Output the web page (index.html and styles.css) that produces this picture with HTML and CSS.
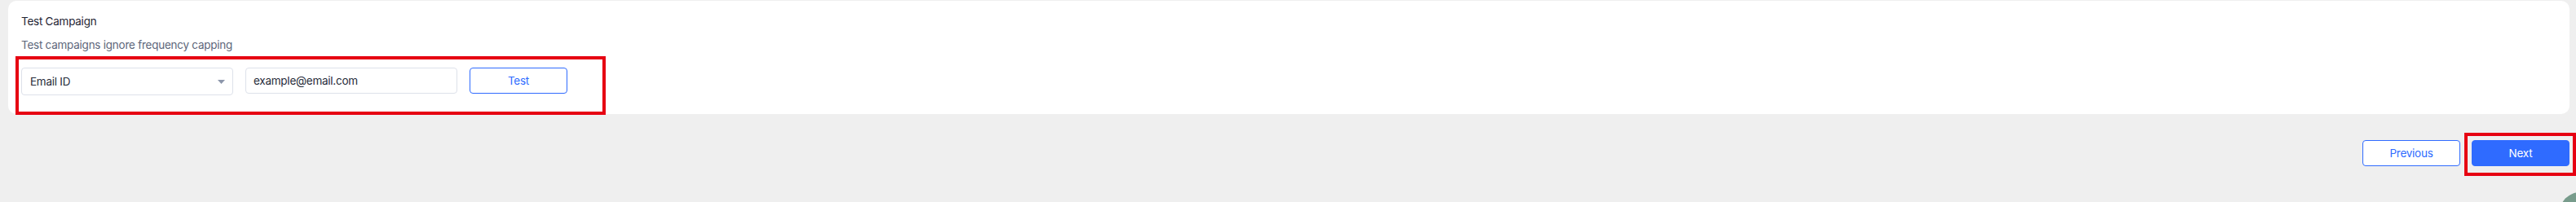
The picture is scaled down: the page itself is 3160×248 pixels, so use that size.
FILE: index.html
```html
<!DOCTYPE html>
<html lang="en">
<head>
    <meta charset="UTF-8">
    <meta name="viewport" content="width=device-width, initial-scale=1.0">
    <title>Test Campaign</title>
    <link rel="stylesheet" href="styles.css">
</head>
<body>
    <div class="page">
        <div class="card">
            <h3 class="card-title">Test Campaign</h3>
            <p class="card-note">Test campaigns ignore frequency capping</p>

            <div class="test-row">
                <div class="select">
                    <span>Email ID</span>
                    <svg class="caret" width="9" height="5" viewBox="0 0 9 5"><path d="M0 0h9L4.5 5z" fill="#8c96ab"/></svg>
                </div>
                <input type="text" class="text-input" value="example@email.com">
                <button class="btn btn-outline">Test</button>
            </div>
        </div>

        <div class="footer">
            <button class="btn btn-outline">Previous</button>
            <button class="btn btn-primary">Next</button>
        </div>
    </div>

    <!-- highlight marks -->
    <div class="mark mark-test"></div>
    <div class="mark mark-next"></div>

    <div class="chat-corner"><div class="chat-bubble"></div></div>
</body>
</html>
```

FILE: styles.css
```css
* {
    box-sizing: border-box;
}
html, body {
    margin: 0;
    width: 3160px;
    height: 248px;
    overflow: hidden;
}
body {
    position: relative;
    background-color: #efefef;
    font-family: Inter, "Noto Sans", sans-serif;
    font-size: 13.5px;
    letter-spacing: -0.25px;
    line-height: 20px;
    color: #1f2433;
}
.page {
    padding: 1px 8px 0 10px;
}
.card {
    background-color: #fff;
    border-radius: 10px;
    padding: 15px 16px 23px;
}
.card-title {
    margin: 0 0 9px;
    font-size: 13.5px;
    font-weight: 400;
    color: #1f2433;
}
.card-note {
    margin: 0 0 18px;
    color: #5d667a;
}
.test-row {
    display: flex;
    align-items: flex-start;
    gap: 15px;
}
.select {
    width: 260px;
    height: 34px;
    padding: 0 9px 0 10px;
    display: flex;
    align-items: center;
    justify-content: space-between;
    border: 1px solid #dde1ea;
    border-radius: 4px;
    color: #262b39;
}
.text-input {
    width: 260px;
    height: 32px;
    padding: 0 9px;
    border: 1px solid #dde1ea;
    border-radius: 4px;
    font-family: inherit;
    font-size: 13.5px;
    letter-spacing: -0.25px;
    color: #262b39;
    outline: none;
}
.btn {
    width: 120px;
    height: 32px;
    border-radius: 4px;
    font-family: inherit;
    font-size: 13.5px;
    letter-spacing: -0.25px;
    cursor: pointer;
}
.btn-outline {
    background-color: #fff;
    border: 1px solid #2f6bff;
    color: #2f6bff;
}
.btn-primary {
    background-color: #2f6bff;
    border: 1px solid #2f6bff;
    color: #fff;
}
.footer {
    display: flex;
    justify-content: flex-end;
    gap: 14px;
    margin-top: 32px;
}
.mark {
    position: absolute;
    border: 4px solid #e60012;
}
.mark-test {
    left: 19px;
    top: 69px;
    width: 724px;
    height: 72px;
}
.mark-next {
    left: 3023px;
    top: 163px;
    width: 137px;
    height: 53px;
}
.chat-corner {
    position: absolute;
    left: 3140px;
    top: 236px;
    width: 20px;
    height: 12px;
    overflow: hidden;
}
.chat-bubble {
    width: 50px;
    height: 50px;
    border-radius: 50%;
    background-color: #789c8c;
}
```
